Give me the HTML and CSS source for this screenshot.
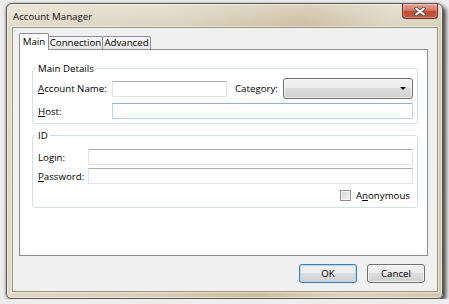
FILE: index.html
```html
<!DOCTYPE html>
<html>
<head>
<meta charset="utf-8">
<title>Account Manager</title>
<link rel="stylesheet" href="styles.css">
</head>
<body>
<div class="window">
  <div class="titlebar">
    <span class="title">Account Manager</span>
    <span class="close">
      <svg width="12" height="9" viewBox="0 0 12 9">
        <path d="M2 1.5 L10 7.5 M10 1.5 L2 7.5" stroke="#4a4a4a" stroke-width="3.6" stroke-linecap="round" fill="none"/>
        <path d="M2 1.5 L10 7.5 M10 1.5 L2 7.5" stroke="#ffffff" stroke-width="2" stroke-linecap="round" fill="none"/>
      </svg>
    </span>
  </div>
  <div class="client">
    <div class="tabs">
      <div class="tab active">Main</div>
      <div class="tab t-conn">Connection</div>
      <div class="tab t-adv">Advanced</div>
    </div>
    <div class="panel">
      <fieldset class="group">
        <legend>Main Details</legend>
        <div class="row row-a">
          <span class="lbl w74"><u>A</u>ccount Name:</span>
          <span class="input w-name"></span>
          <span class="lbl w-cat">Cate<u>g</u>ory:</span>
          <span class="combo"><span class="arrow"></span></span>
        </div>
        <div class="row row-b">
          <span class="lbl w74"><u>H</u>ost:</span>
          <span class="input focused w-host"></span>
        </div>
      </fieldset>
      <fieldset class="group group-id">
        <legend>ID</legend>
        <div class="row row-b first">
          <span class="lbl w50">Login:</span>
          <span class="input w-long"></span>
        </div>
        <div class="row row-b pw">
          <span class="lbl w50"><u>P</u>assword:</span>
          <span class="input w-long"></span>
        </div>
        <div class="row row-cb">
          <span class="checkbox"></span>
          <span class="lbl">A<u>n</u>onymous</span>
        </div>
      </fieldset>
    </div>
    <div class="buttons">
      <button class="btn default">OK</button>
      <button class="btn">Cancel</button>
    </div>
  </div>
</div>
</body>
</html>
```
FILE: styles.css
```css
body {
  margin: 0;
  background: #ededed;
  font-family: "Open Sans", "Noto Sans", sans-serif;
  font-size: 9.7px;
  color: #000;
}

.window {
  margin: 3px 0 0 6px;
  width: 437px;
  height: 296px;
  box-sizing: border-box;
  border: 1px solid #5d584c;
  border-radius: 6px 6px 5px 5px;
  padding: 0 4px 6px 5px;
  display: flex;
  flex-direction: column;
  background:
    linear-gradient(to bottom, rgba(255,255,255,0.32), rgba(255,255,255,0) 24px),
    linear-gradient(100deg, #e2dbc8 0%, #dbd2bd 35%, #cbbd9f 62%, #ddd4bf 80%, #d3c8ad 100%);
  box-shadow: inset 0 0 0 1px rgba(255,255,255,0.45), 3px 3px 4px 0 rgba(0,0,0,0.7), -1px 0 3px rgba(0,0,0,0.25);
}

.titlebar {
  height: 23px;
  flex: none;
  display: flex;
  align-items: flex-start;
}

.title {
  padding: 6px 0 0 1px;
  line-height: 13px;
  color: #111;
}

.close {
  margin-left: auto;
  width: 36px;
  height: 15px;
  box-sizing: border-box;
  border: 1px solid #6a2c22;
  border-top: none;
  border-radius: 0 0 4px 4px;
  background: linear-gradient(#e6a699 0%, #d57462 45%, #c4482f 55%, #c05a45 100%);
  box-shadow: inset 0 0 0 1px rgba(255,255,255,0.3);
  display: flex;
  align-items: center;
  justify-content: center;
}

.client {
  flex: 1;
  background: #f0f0f0;
  border: 1px solid #9a9483;
  box-shadow: 0 0 0 1px rgba(255,255,255,0.45);
  padding: 5px 9px 0 6px;
  display: flex;
  flex-direction: column;
}

.tabs {
  height: 17px;
  display: flex;
  align-items: flex-end;
  margin-bottom: -1px;
  position: relative;
  z-index: 1;
}

.tab {
  box-sizing: border-box;
  height: 13px;
  margin-bottom: 1px;
  margin-left: -1px;
  border: 1px solid #898c95;
  border-bottom: none;
  background: linear-gradient(#f7f7f7, #e6e6e6);
  line-height: 12px;
  text-align: center;
  border-radius: 2px 2px 0 0;
}

.tab.active {
  margin-left: 0;
  width: 30px;
  height: 17px;
  margin-bottom: 0;
  background: #fff;
  line-height: 15px;
  position: relative;
  z-index: 2;
}

.t-conn { width: 55px; }
.t-adv { width: 49px; }

.panel {
  box-sizing: border-box;
  height: 207px;
  border: 1px solid #898c95;
  background: #fff;
  padding: 12px 9px 0 12px;
}

.group {
  margin: 0;
  border: 1px solid #d5dfe5;
  border-radius: 3px;
  padding: 3px 4px 4px 5px;
  min-width: 0;
}

.group legend {
  padding: 0 2px;
  margin-left: -2px;
  line-height: 13px;
}

.group-id {
  margin-top: 5px;
  padding-top: 7px;
  padding-bottom: 5px;
}

.row {
  display: flex;
  align-items: center;
}

.row-a { height: 21px; }
.row-b { height: 16px; margin-top: 4px; }
.row-b.first { margin-top: 0; }
.row-b.pw { margin-top: 3px; }
.row-cb {
  height: 13px;
  margin-top: 5px;
  justify-content: flex-end;
  padding-right: 3px;
}

.lbl {
  flex: none;
  line-height: 13px;
  white-space: nowrap;
}

.lbl u { text-underline-offset: 1px; }

.w74 { width: 74px; }
.w50 { width: 50px; }
.w-cat { width: 48px; margin-left: 8px; }

.input {
  flex: none;
  box-sizing: border-box;
  height: 16px;
  background: #fff;
  border: 1px solid #e2e3ea;
  border-top-color: #abadb3;
  border-radius: 1px;
}

.input.focused {
  border-color: #b7d4ee;
  border-top-color: #8ab5dd;
}

.w-name { width: 115px; margin-top: 1px; }
.w-host { width: 301px; }
.w-long { width: 325px; }

.combo {
  flex: none;
  box-sizing: border-box;
  width: 130px;
  height: 21px;
  border: 1px solid #707070;
  border-radius: 3px;
  background: linear-gradient(#f2f2f2 0%, #ebebeb 50%, #dddddd 50%, #cfcfcf 100%);
  box-shadow: inset 0 0 0 1px rgba(255,255,255,0.6);
  display: flex;
  align-items: center;
  justify-content: flex-end;
  padding-right: 6px;
}

.arrow {
  width: 0;
  height: 0;
  border-left: 3px solid transparent;
  border-right: 3px solid transparent;
  border-top: 3px solid #000;
}

.checkbox {
  flex: none;
  box-sizing: border-box;
  width: 11px;
  height: 11px;
  margin-right: 5px;
  border: 1px solid #8f8f8f;
  background: linear-gradient(135deg, #d4d4d4, #f4f4f4);
  box-shadow: inset 0 0 0 1px #f7f7f7;
}

.buttons {
  margin-top: 8px;
  display: flex;
  justify-content: flex-end;
  gap: 10px;
  padding-right: 3px;
}

.btn {
  box-sizing: border-box;
  width: 58px;
  height: 19px;
  padding: 0;
  font: inherit;
  color: #000;
  border: 1px solid #707070;
  border-radius: 3px;
  background: linear-gradient(#f2f2f2 0%, #ebebeb 50%, #dddddd 50%, #cfcfcf 100%);
  box-shadow: inset 0 0 0 1px rgba(255,255,255,0.7);
}

.btn.default {
  border-color: #3c7fb1;
  box-shadow: inset 0 0 0 1px #a8dcf7;
}
```
